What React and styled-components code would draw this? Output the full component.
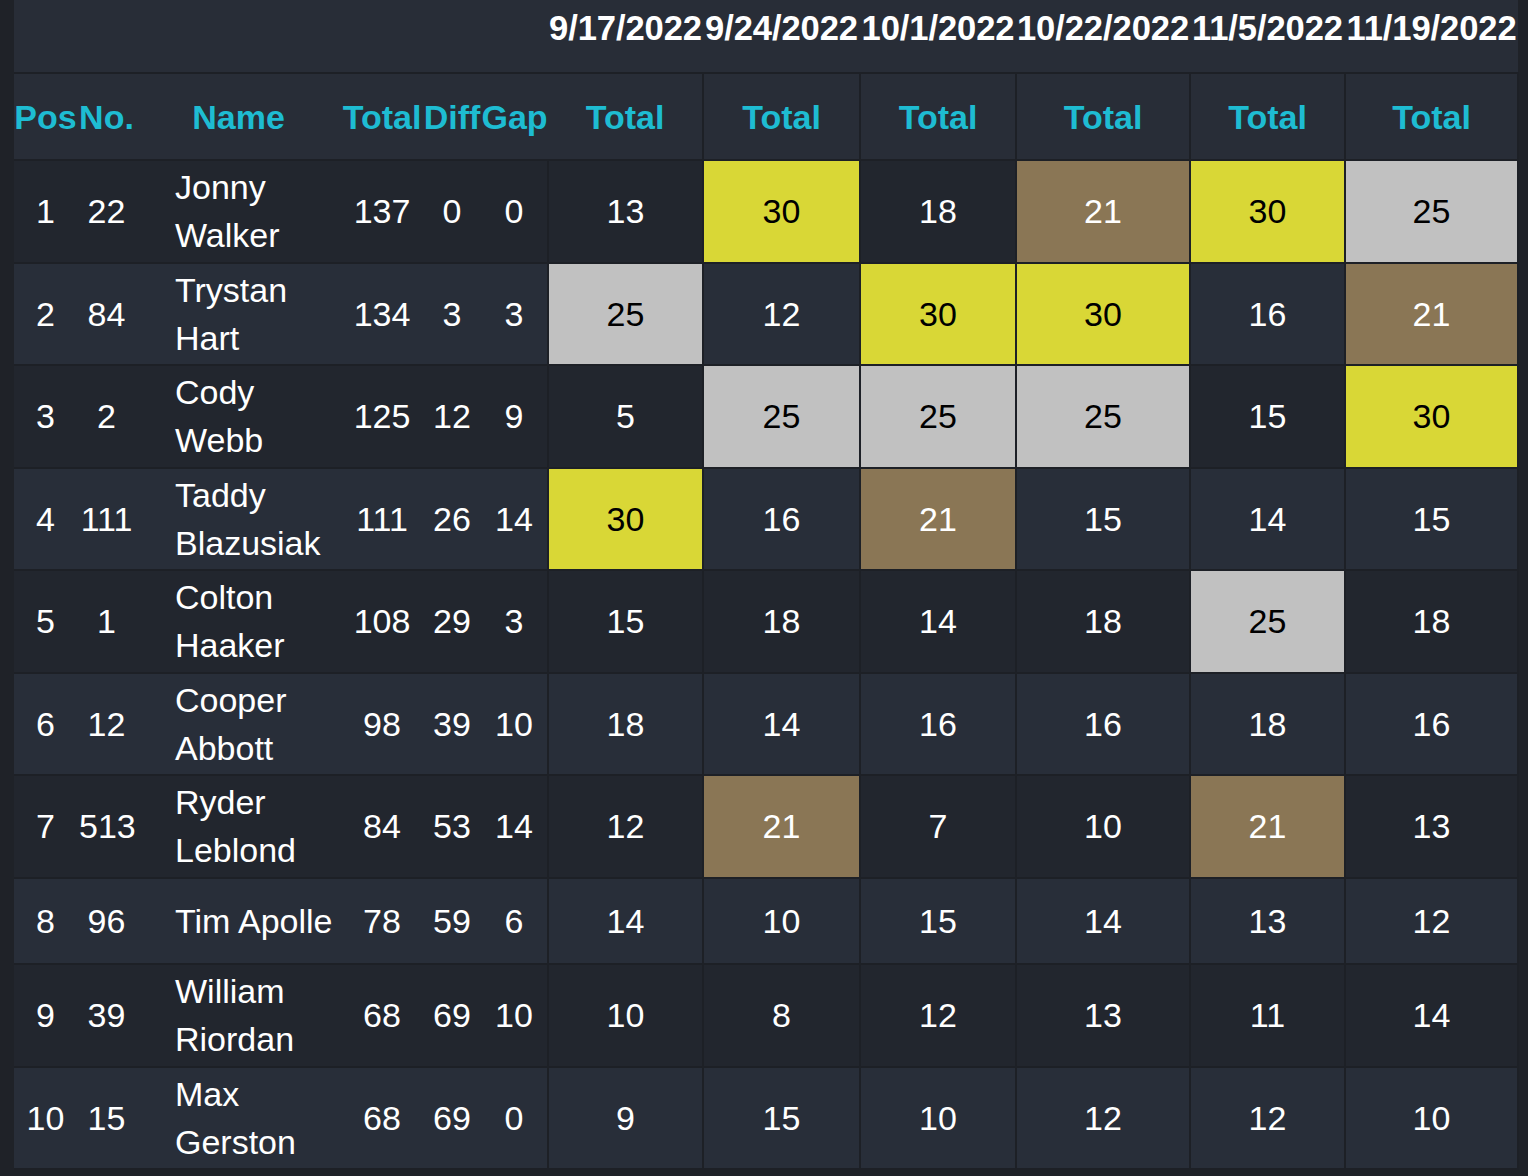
import React from "react";
import styled, { createGlobalStyle } from "styled-components";

const GlobalStyle = createGlobalStyle`
  html, body {
    margin: 0;
    padding: 0;
    background: #1f2228;
  }
  body {
    font-family: "Liberation Sans", Arial, Helvetica, sans-serif;
  }
`;

const dates = ["9/17/2022", "9/24/2022", "10/1/2022", "10/22/2022", "11/5/2022", "11/19/2022"];

const riders = [
  { pos: 1, no: 22, name: "Jonny Walker", total: 137, diff: 0, gap: 0, rounds: [13, 30, 18, 21, 30, 25] },
  { pos: 2, no: 84, name: "Trystan Hart", total: 134, diff: 3, gap: 3, rounds: [25, 12, 30, 30, 16, 21] },
  { pos: 3, no: 2, name: "Cody Webb", total: 125, diff: 12, gap: 9, rounds: [5, 25, 25, 25, 15, 30] },
  { pos: 4, no: 111, name: "Taddy Blazusiak", total: 111, diff: 26, gap: 14, rounds: [30, 16, 21, 15, 14, 15] },
  { pos: 5, no: 1, name: "Colton Haaker", total: 108, diff: 29, gap: 3, rounds: [15, 18, 14, 18, 25, 18] },
  { pos: 6, no: 12, name: "Cooper Abbott", total: 98, diff: 39, gap: 10, rounds: [18, 14, 16, 16, 18, 16] },
  { pos: 7, no: 513, name: "Ryder Leblond", total: 84, diff: 53, gap: 14, rounds: [12, 21, 7, 10, 21, 13] },
  { pos: 8, no: 96, name: "Tim Apolle", total: 78, diff: 59, gap: 6, rounds: [14, 10, 15, 14, 13, 12] },
  { pos: 9, no: 39, name: "William Riordan", total: 68, diff: 69, gap: 10, rounds: [10, 8, 12, 13, 11, 14] },
  { pos: 10, no: 15, name: "Max Gerston", total: 68, diff: 69, gap: 0, rounds: [9, 15, 10, 12, 12, 10] },
];

const colWidths = [63, 59, 205, 82, 58, 67, 155, 157, 156, 174, 155, 173];

const podium = {
  30: { bg: "#d9d736", fg: "#000" },
  25: { bg: "#c1c1c1", fg: "#000" },
  21: { bg: "#8a7655", fg: "#fff" },
};

const Page = styled.div`
  padding: 0 10px 6px 14px;
`;

const Table = styled.table`
  width: 1504px;
  table-layout: fixed;
  border-collapse: collapse;
  color: #fff;
  font-size: 34px;
  line-height: 48px;
`;

const DateRow = styled.tr`
  background: #282d37;
  border-bottom: 2px solid #1d2026;
`;

const DateCell = styled.th`
  height: 68px;
  padding: 4px 0 0;
  vertical-align: top;
  text-align: center;
  white-space: nowrap;
  font-weight: 700;
  font-size: 34.6px;
  letter-spacing: -0.1px;
`;

const LabelRow = styled.tr`
  background: #282d37;
  border-bottom: 2px solid #1d2026;
`;

const LabelCell = styled.th`
  height: 85px;
  padding: 0;
  text-align: center;
  white-space: nowrap;
  font-weight: 700;
  color: #1ebcd2;
  border-right: ${(p) => (p.$round ? "2px solid #1d2026" : "none")};
`;

const Row = styled.tr`
  background: ${(p) => (p.$odd ? "#22262e" : "#282e39")};
  border-bottom: 2px solid #1d2026;
`;

const Cell = styled.td`
  height: 80px;
  padding: 2px 2px 2.5px;
  text-align: center;
  vertical-align: middle;
  white-space: nowrap;
`;

const NameCell = styled(Cell)`
  padding-left: 39px;
  text-align: left;
  white-space: normal;
`;

const RoundCell = styled(Cell)`
  background: ${(p) => (p.$tone ? p.$tone.bg : "transparent")};
  color: ${(p) => (p.$tone ? p.$tone.fg : "#fff")};
  border-left: 2px solid #1d2026;
  border-right: 2px solid #1d2026;
`;

export default function App() {
  return (
    <Page>
      <GlobalStyle />
      <Table>
        <colgroup>
          {colWidths.map((w, i) => (
            <col key={i} style={{ width: w }} />
          ))}
        </colgroup>
        <thead>
          <DateRow>
            <DateCell colSpan={6} />
            {dates.map((d) => (
              <DateCell key={d}>{d}</DateCell>
            ))}
          </DateRow>
          <LabelRow>
            <LabelCell>Pos</LabelCell>
            <LabelCell>No.</LabelCell>
            <LabelCell>Name</LabelCell>
            <LabelCell>Total</LabelCell>
            <LabelCell>Diff</LabelCell>
            <LabelCell>Gap</LabelCell>
            {dates.map((d) => (
              <LabelCell key={d} $round>
                Total
              </LabelCell>
            ))}
          </LabelRow>
        </thead>
        <tbody>
          {riders.map((r, i) => (
            <Row key={r.pos} $odd={i % 2 === 0}>
              <Cell>{r.pos}</Cell>
              <Cell>{r.no}</Cell>
              <NameCell>{r.name}</NameCell>
              <Cell>{r.total}</Cell>
              <Cell>{r.diff}</Cell>
              <Cell>{r.gap}</Cell>
              {r.rounds.map((pts, j) => (
                <RoundCell key={j} $tone={podium[pts]}>
                  {pts}
                </RoundCell>
              ))}
            </Row>
          ))}
        </tbody>
      </Table>
    </Page>
  );
}
